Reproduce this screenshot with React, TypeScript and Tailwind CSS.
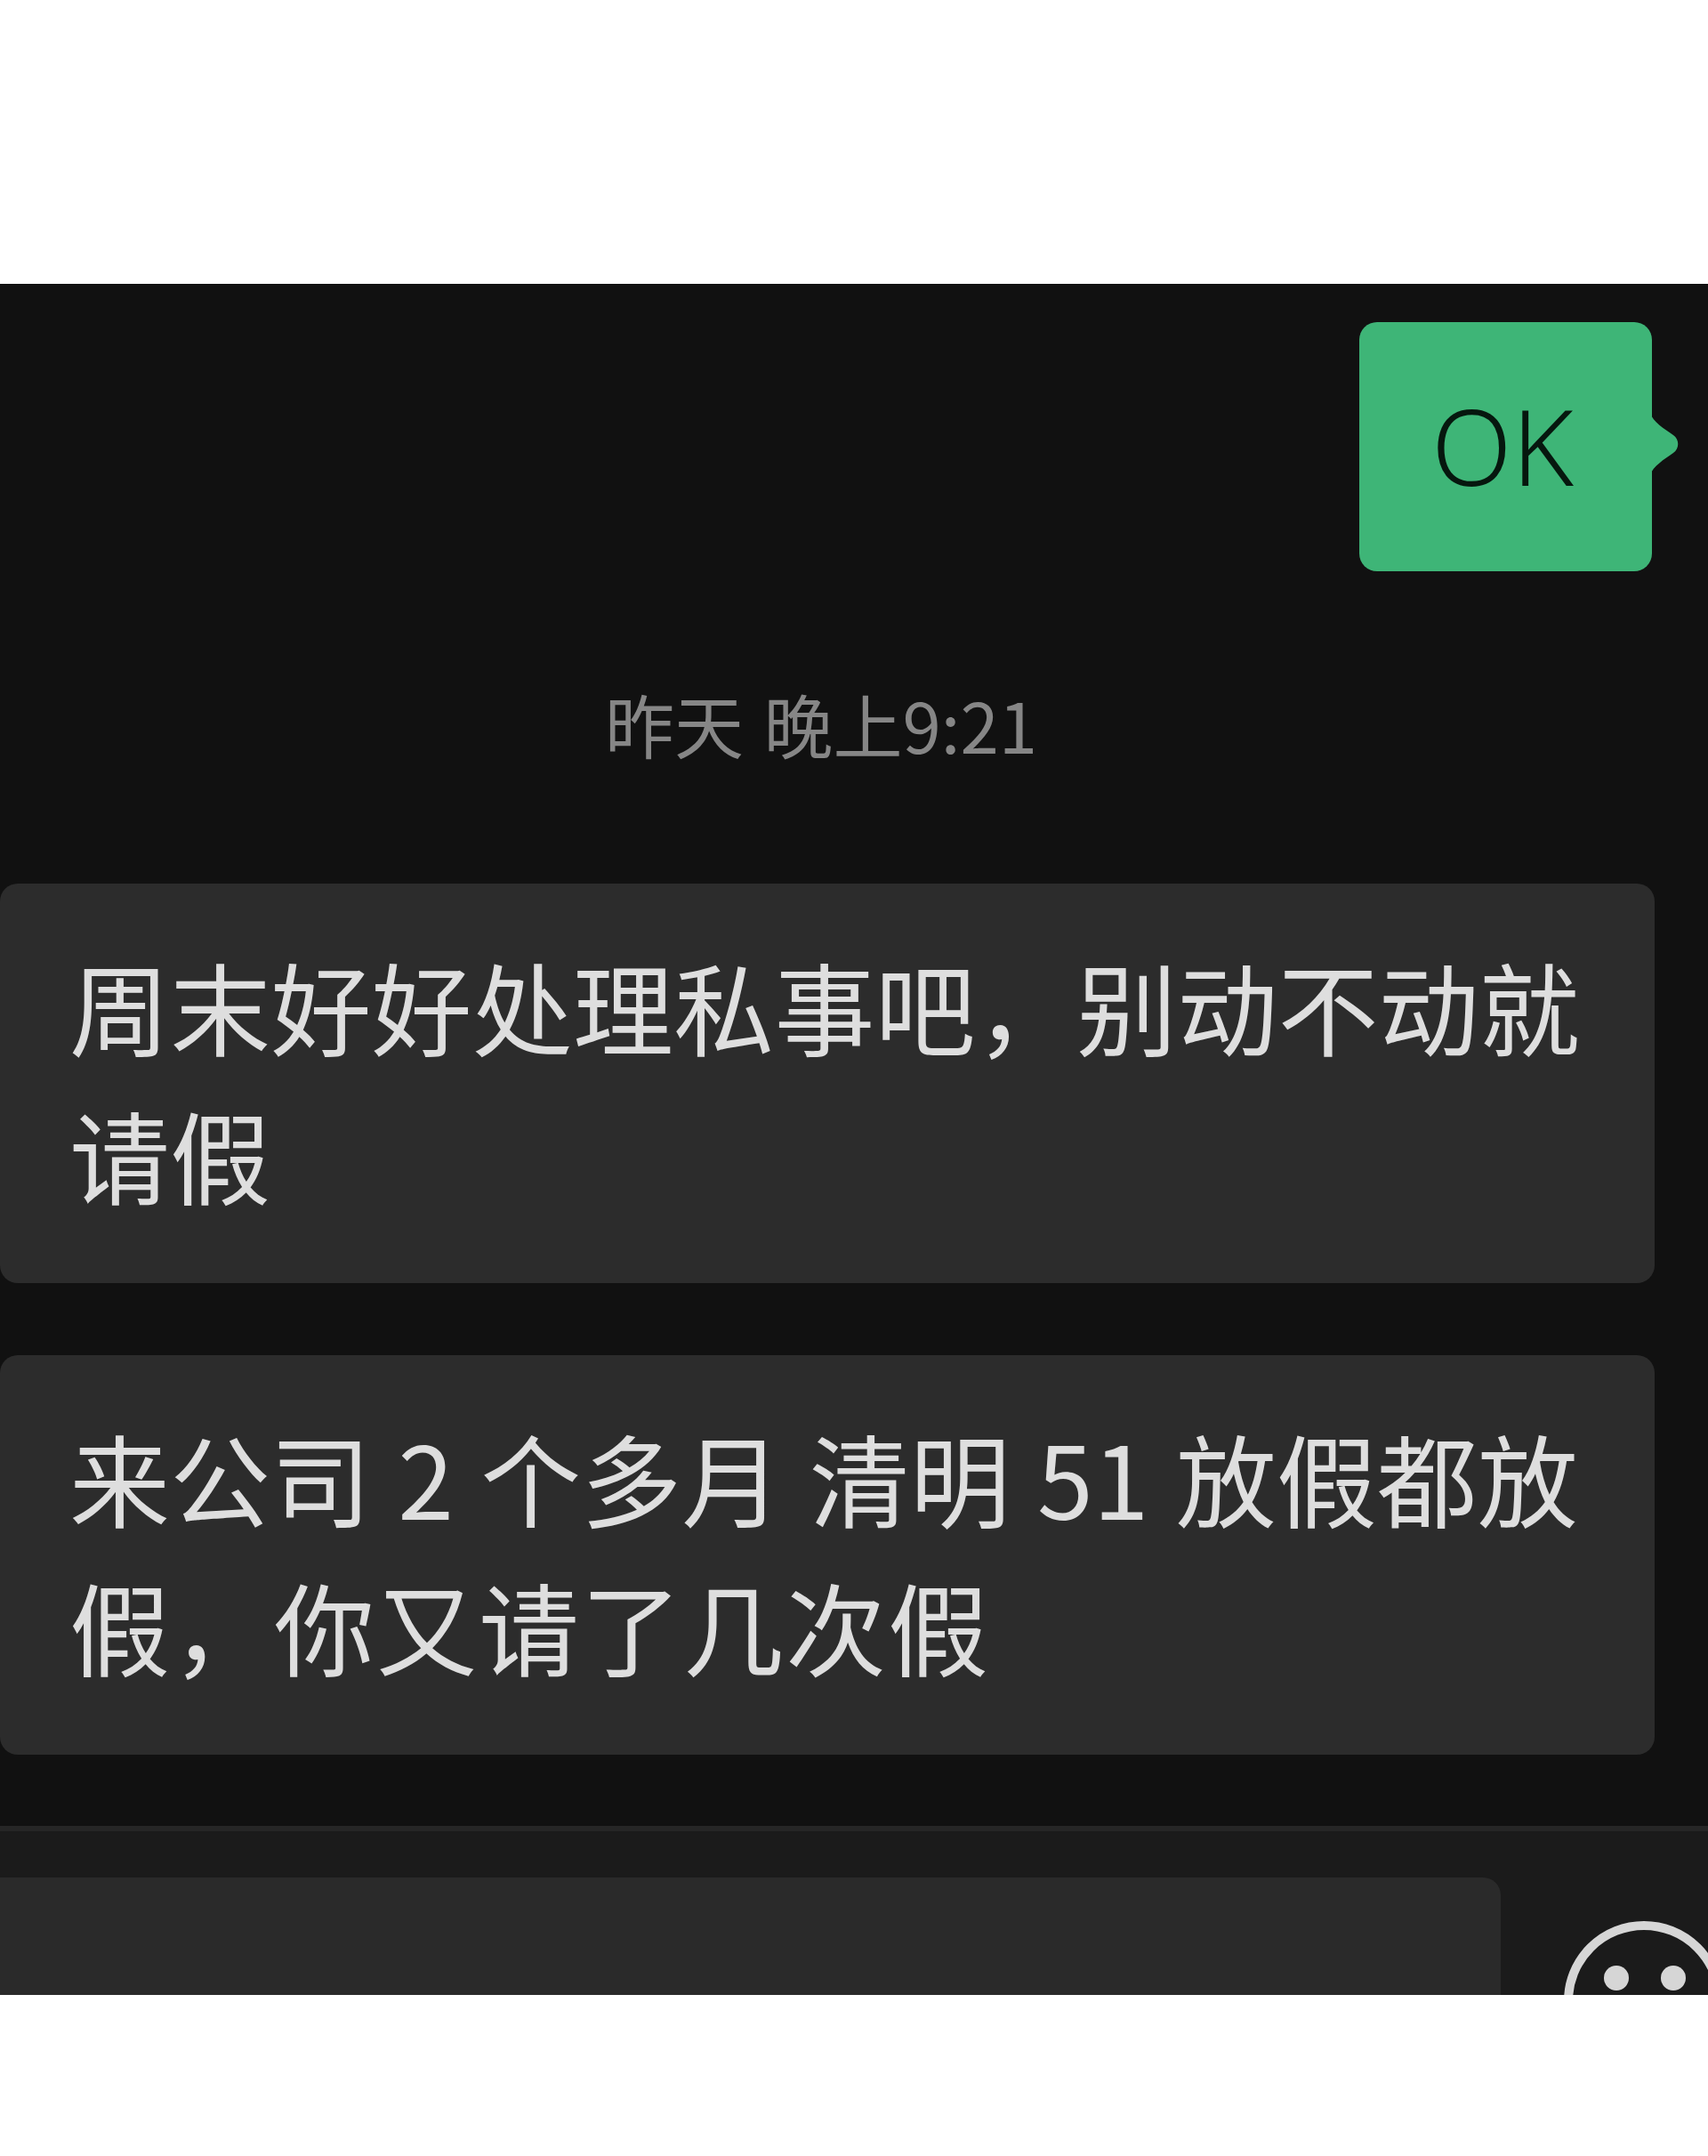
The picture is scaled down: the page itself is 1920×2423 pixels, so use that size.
const fontStack = '"Noto Sans CJK SC", sans-serif'

const messages = [
  {
    lines: [
      { text: '周末好好处理私事吧，别动不动就', className: 'tracking-[0.2px]' },
      { text: '请假', className: '' },
    ],
  },
  {
    lines: [
      { text: '来公司 2 个多月 清明 51 放假都放', className: '[word-spacing:5px]' },
      { text: '假，你又请了几次假', className: 'tracking-[2px]' },
    ],
  },
]

function OutgoingBubble() {
  return (
    <div className="flex justify-end pr-[63px]">
      <div className="relative flex h-[280px] w-[329px] items-center justify-center rounded-[20px] bg-[#3eb577] pr-[7px] pb-[2px]">
        <span className="font-['Noto_Sans'] text-[118px] leading-none font-light text-[#06170e]">OK</span>
        <svg className="absolute top-[102px] left-[327px] h-[70px] w-[34px]" viewBox="0 0 34 70">
          <path d="M0 0 C3 10 16 18 26 25 C33 30 33 40 26 45 C16 52 3 60 0 70 Z" fill="#3eb577" />
        </svg>
      </div>
    </div>
  )
}

function IncomingBubble({ lines }: { lines: { text: string; className: string }[] }) {
  return (
    <div className="mr-[60px] flex h-[449px] flex-col justify-center rounded-[20px] bg-[#2c2c2c] pb-[10px] pl-[78px] text-[113px] leading-[167px] text-[#dedede]">
      {lines.map((line) => (
        <div key={line.text} className={`whitespace-pre ${line.className}`}>
          {line.text}
        </div>
      ))}
    </div>
  )
}

export default function App() {
  return (
    <div className="h-[2423px] w-[1920px] overflow-hidden bg-white" style={{ fontFamily: fontStack }}>
      <div className="h-[319px]" />
      <main className="flex h-[1923px] flex-col overflow-hidden bg-[#111111]">
        <div className="pt-[43px]">
          <OutgoingBubble />
        </div>

        <div className="mt-[124px] mb-[133px] pr-[74px] text-center text-[78px] leading-[94px] font-normal text-[#868686] [word-spacing:5px]">
          昨天 晚上9:21
        </div>

        <div className="flex flex-col gap-[81px]">
          {messages.map((m) => (
            <IncomingBubble key={m.lines[0].text} lines={m.lines} />
          ))}
        </div>

        <footer className="mt-[80px] flex flex-1 border-t-[6px] border-[#262626] bg-[#1b1b1b] pt-[52px]">
          <div className="h-[200px] w-[1687px] shrink-0 rounded-tr-[20px] bg-[#2a2a2a]" />
          <svg className="mt-[49px] ml-[71px] h-[180px] w-[180px] shrink-0" viewBox="0 0 180 180">
            <circle cx="90" cy="90" r="85" fill="none" stroke="#d6d6d6" strokeWidth="10" />
            <circle cx="59" cy="64" r="14" fill="#d6d6d6" />
            <circle cx="123" cy="64" r="14" fill="#d6d6d6" />
          </svg>
        </footer>
      </main>
    </div>
  )
}
